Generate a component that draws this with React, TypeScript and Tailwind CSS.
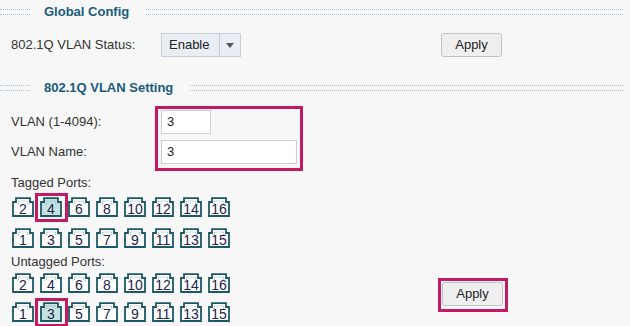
import React from "react";

const PINK = "border-[#c31a62]";

function Port({ n, selected = false, mark = false }: { n: number; selected?: boolean; mark?: boolean }) {
  return (
    <div className="relative w-[22px] h-[20px] shrink-0">
      <svg className="absolute inset-0" width="22" height="20" viewBox="0 0 22 20">
        <path
          d="M1 5H4V1.2H18V5H21V19H1Z"
          fill={selected ? "#c4e2e2" : "#ffffff"}
          stroke="#1d5866"
          strokeWidth="1.8"
        />
        <path d="M4.5 7H6.5V4H15.5V7H17.5" fill="none" stroke="#9fb9bf" strokeWidth="1" strokeDasharray="1 1" />
      </svg>
      <span className="absolute left-0 right-0 bottom-[1px] text-center text-[14px] leading-[14px] text-[#23234a]">
        {n}
      </span>
      {mark && <div className={`absolute left-[-5px] top-[-4px] right-[-6px] bottom-[-5px] border-[3px] ${PINK}`} />}
    </div>
  );
}

function PortRows({ mark }: { mark: "even4" | "odd3" }) {
  const even = [2, 4, 6, 8, 10, 12, 14, 16];
  const odd = [1, 3, 5, 7, 9, 11, 13, 15];
  return (
    <>
      <div className="flex gap-[6px] ml-[1px] mt-[6px]">
        {even.map((n) => (
          <Port key={n} n={n} selected={mark === "even4" && n === 4} mark={mark === "even4" && n === 4} />
        ))}
      </div>
      <div className={`flex gap-[6px] ml-[1px] ${mark === "even4" ? "mt-[11px]" : "mt-[9px]"}`}>
        {odd.map((n) => (
          <Port key={n} n={n} selected={mark === "odd3" && n === 3} mark={mark === "odd3" && n === 3} />
        ))}
      </div>
    </>
  );
}

function Header({ title, mt = "" }: { title: string; mt?: string }) {
  return (
    <div className={`flex items-center h-[24px] ${mt}`}>
      <div className="w-[30px] h-[6px] border-y border-dotted border-[#a9c5dc]" />
      <div className="ml-[14px] mr-[17px] text-[13px] font-bold text-[#1a5b7c] whitespace-nowrap leading-[16px]">
        {title}
      </div>
      <div className="flex-1 mr-[7px] h-[6px] border-y border-dotted border-[#a9c5dc]" />
    </div>
  );
}

function ApplyBtn() {
  return (
    <div className="w-[61px] h-[24px] rounded-[3px] border border-[#c3c3c3] bg-[#efefef] flex items-center justify-center text-[13px] text-[#222]">
      Apply
    </div>
  );
}

export default function App() {
  return (
    <div
      className="w-[630px] h-[326px] bg-[#f7f7f7] overflow-hidden text-[#333]"
      style={{ fontFamily: '"Liberation Sans", Arial, sans-serif' }}
    >
      <Header title="Global Config" />
      <div className="flex items-center h-[24px] mt-[9px] px-[11px]">
        <div className="w-[150px] text-[13px]">802.1Q VLAN Status:</div>
        <div className="flex w-[80px] h-[24px] border border-[#c7cdd3] bg-[#e8eef4]">
          <div className="w-[58px] flex items-center pl-[7px] text-[13px] text-[#222] border-r border-[#c7cdd3]">
            Enable
          </div>
          <div className="flex-1 flex items-center justify-center">
            <div className="w-0 h-0 border-l-[4px] border-r-[4px] border-t-[5px] border-l-transparent border-r-transparent border-t-[#555]" />
          </div>
        </div>
        <div className="ml-[200px]">
          <ApplyBtn />
        </div>
      </div>

      <Header title="802.1Q VLAN Setting" mt="mt-[19px]" />

      <div className="flex px-[11px] mt-[10px]">
        <div className="w-[150px] text-[13px]">
          <div className="h-[24px] flex items-center">VLAN (1-4094):</div>
          <div className="h-[24px] flex items-center mt-[6px]">VLAN Name:</div>
        </div>
        <div className="relative">
          <div className="w-[50px] h-[24px] bg-white border border-[#cfcfcf] flex items-center pl-[5px] text-[13px] text-[#222]">
            3
          </div>
          <div className="w-[136px] h-[24px] mt-[6px] bg-white border border-[#cfcfcf] flex items-center pl-[5px] text-[13px] text-[#222]">
            3
          </div>
          <div className={`absolute left-[-6px] top-[-4px] right-[-6px] bottom-[-7px] border-[3px] ${PINK}`} />
        </div>
      </div>

      <div className="flex px-[11px] mt-[11px]">
        <div className="w-[230px]">
          <div className="h-[16px] leading-[16px] text-[13px]">Tagged Ports:</div>
          <PortRows mark="even4" />
          <div className="h-[16px] leading-[16px] text-[13px] mt-[6px]">Untagged Ports:</div>
          <div className="mt-[-3px]">
            <PortRows mark="odd3" />
          </div>
        </div>
        <div className="ml-[201px] mt-[107px] relative self-start">
          <ApplyBtn />
          <div className={`absolute left-[-4px] top-[-4px] right-[-5px] bottom-[-6px] border-[3px] ${PINK}`} />
        </div>
      </div>
    </div>
  );
}
